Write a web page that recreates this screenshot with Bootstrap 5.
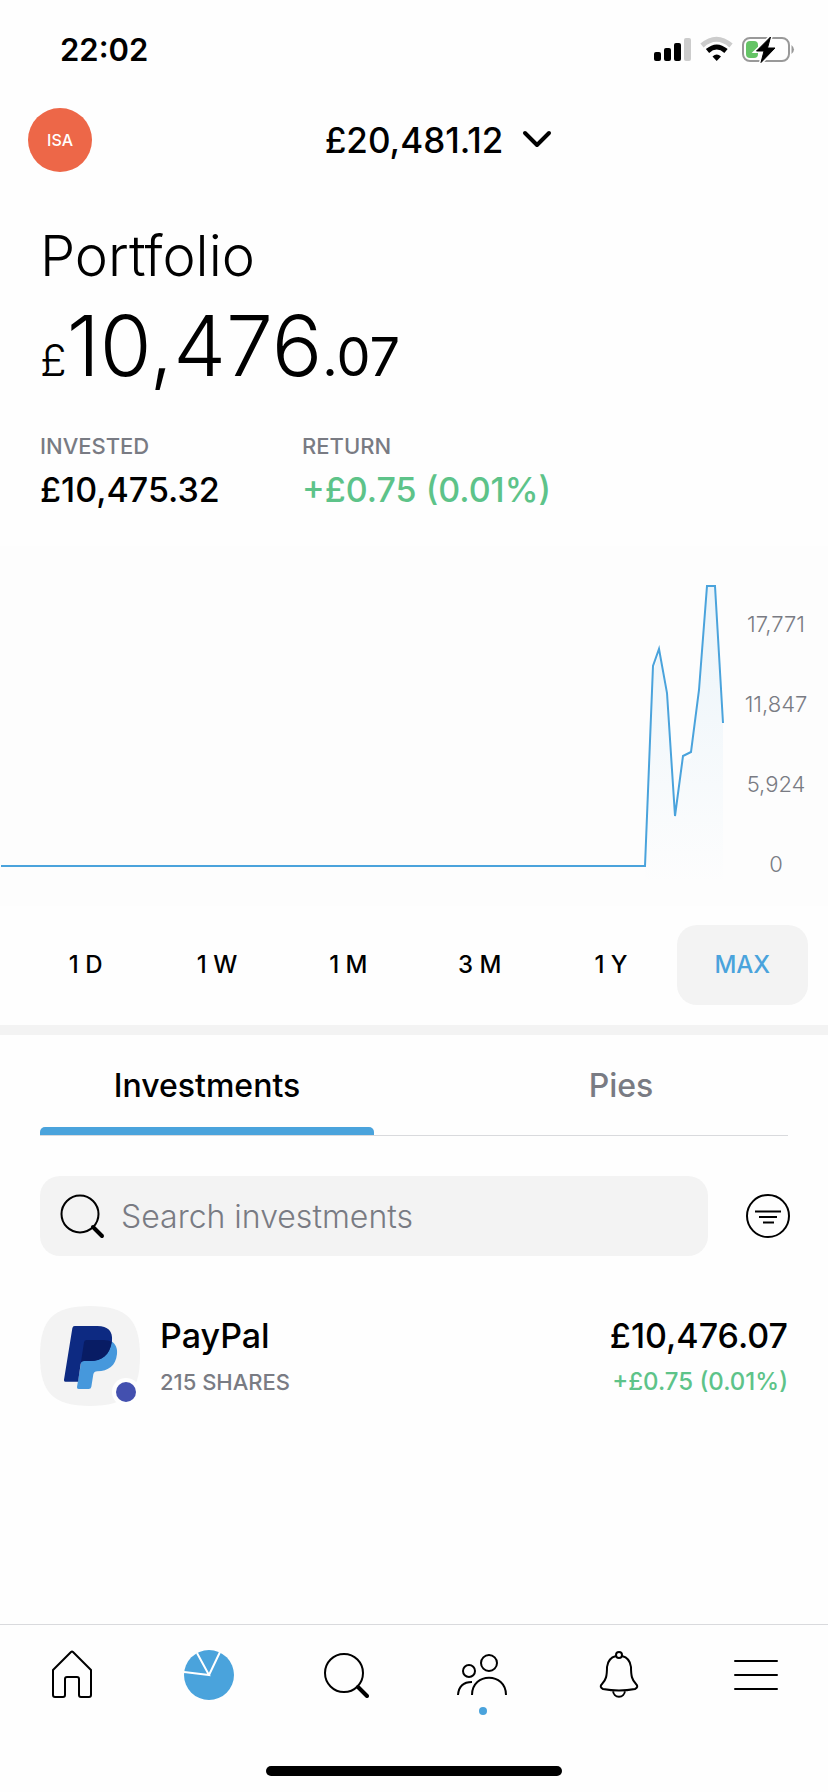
<!DOCTYPE html>
<html lang="en">
<head>
<meta charset="utf-8">
<meta name="viewport" content="width=device-width, initial-scale=1">
<title>Portfolio</title>
<link rel="stylesheet" href="https://cdn.jsdelivr.net/npm/bootstrap@5.3.0/dist/css/bootstrap.min.css">
<style>
  :root { --accent: #4aa3dc; --muted: #797b83; --gain: #5dc389; --soft: #f3f3f3; }
  body { font-family: Inter, "Open Sans", sans-serif; font-weight: 500; color: #000; background: #fefefe; }
  svg { display: block; flex: none; }
  .side { padding-left: 40px; padding-right: 40px; }
  .status-bar { height: 100px; padding: 0 33px 0 60px; font-size: 31px; font-weight: 600; }
  .top-bar { height: 80px; display: grid; grid-template-columns: 64px 1fr; padding: 0 40px 0 28px; align-items: center; }
  .plain { border: 0; background: none; padding: 0; color: inherit; font-weight: inherit; }
  .account { width: 64px; height: 64px; background: #ed6748; color: #fff; font-size: 16px; }
  .figure-text { font-size: 34px; line-height: 40px; }
  .top-bar .figure-text { font-size: 35px; }
  .title { font-size: 56px; line-height: 64px; font-weight: 300; margin: 44px 0 16px; }
  .total { font-size: 84px; line-height: 84px; font-weight: 300; margin-bottom: 44px; }
  .total span { line-height: 1; }
  .total .pound { font-size: 44px; }
  .total .pence { font-size: 54px; font-weight: 400; }
  .caption-text { font-size: 22px; line-height: 28px; color: var(--muted); }
  .stats { display: grid; grid-template-columns: 182px auto; column-gap: 80px; justify-content: start; margin-bottom: 36px; }
  .stats dt, .stats dd { font-weight: 500; margin: 0; }
  .stats dt { margin-bottom: 10px; }
  .gain { color: var(--gain); }
  .chart { height: 360px; background: #fdfdfd; }
  .chart svg { flex: 1 1 0; min-width: 0; height: 100%; }
  .scale { width: 104px; padding-top: 38px; font-size: 22px; line-height: 80px; font-weight: 300; color: var(--muted); text-align: center; }
  .ranges { padding: 19px 20px 20px; border-bottom: 10px solid var(--soft); }
  .ranges .btn { flex: 1 1 0; height: 80px; border: 0; border-radius: 20px; padding: 0; font-size: 24px; font-weight: 500; color: #000; }
  .ranges .btn.active { background: var(--soft); color: var(--accent); }
  .tabs { margin: 0 40px 40px; border-bottom: 1px solid #d9dadd; gap: 80px; }
  .tabs .nav-link { height: 100px; padding: 2px 0 0; border: 0; background: none; font-size: 32px; color: var(--muted); }
  .tabs .nav-link.active { color: #000; position: relative; }
  .tabs .nav-link.active::after { content: ""; position: absolute; left: 0; right: 0; bottom: 0; height: 8px; background: var(--accent); border-radius: 5px 5px 0 0; }
  .search-row { padding: 0 38px 0 40px; gap: 38px; margin-bottom: 50px; }
  .search-box { background: var(--soft); height: 80px; border-radius: 20px; padding: 0 20px; gap: 16px; }
  .search-box input { border: 0; background: none; outline: 0; padding: 2px 0 0; font-size: 32px; font-weight: 300; min-width: 0; }
  .search-box input::placeholder { color: var(--muted); opacity: 1; }
  .holding { color: inherit; gap: 20px; }
  .holding .lines { padding-top: 10px; display: grid; row-gap: 8px; align-content: start; }
  .holding .caption-text, .holding .gain { line-height: 36px; }
  .holding .gain { font-size: 24px; }
  .logo { width: 100px; height: 100px; }
  .bottom-bar { border-top: 1px solid #d9dadd; height: 168px; padding: 0 4px; position: relative; }
  .bottom-bar a { flex: 1 1 0; height: 100px; display: flex; justify-content: center; align-items: center; color: #000; }
  .home-line { position: absolute; left: 50%; bottom: 16px; width: 296px; height: 10px; margin-left: -148px; border-radius: 5px; background: #000; }
</style>
</head>
<body>
<div class="d-flex flex-column min-vh-100">
  <div class="status-bar d-flex align-items-center justify-content-between">
    <span>22:02</span>
    <svg width="142" height="28" viewBox="0 0 142 28" aria-hidden="true">
      <rect x="1" y="16" width="7" height="9" rx="2"/><rect x="11" y="12" width="7" height="13" rx="2"/><rect x="21" y="7" width="7" height="18" rx="2"/><rect x="31" y="2" width="7" height="23" rx="2" fill="#ccc"/>
      <path d="M49 9.500Q63.500-3 78 9.500" fill="none" stroke="#ccc" stroke-width="5"/>
      <path d="M54.500 15Q63.700 7 73 15" fill="none" stroke="#000" stroke-width="5"/>
      <path d="M59.500 20.500Q63.700 16.500 68 20.500L63.700 25z"/>
      <rect x="90" y="2" width="46" height="23" rx="7" fill="none" stroke="#999" stroke-width="2"/>
      <rect x="93" y="5" width="12" height="17" rx="4" fill="#65c466"/>
      <path d="M138.500 9q5 4.500 0 9z" fill="#999"/>
      <path d="M117.500 1L103.500 15h7.500l-3 11.500L122 12h-7.500z" stroke="#fefefe" stroke-width="4"/>
      <path d="M117.500 1L103.500 15h7.500l-3 11.500L122 12h-7.500z" stroke="#000" stroke-linejoin="round"/>
    </svg>
  </div>

  <header class="top-bar">
    <button class="plain account rounded-circle" type="button">ISA</button>
    <button class="plain figure-text d-flex align-items-center justify-content-center" type="button">
      £20,481.12
      <svg class="ms-3" width="36" height="24" viewBox="0 0 36 24" fill="none" stroke="#000" stroke-width="4" stroke-linecap="round" stroke-linejoin="round" aria-hidden="true"><path d="M6 5l12 12L30 5"/></svg>
    </button>
  </header>

  <main class="flex-grow-1">
    <section class="side">
      <h1 class="title">Portfolio</h1>
      <div class="total"><span class="pound">£</span>10,476<span class="pence">.07</span></div>
      <dl class="stats">
        <dt class="caption-text">INVESTED</dt><dt class="caption-text">RETURN</dt>
        <dd class="figure-text">£10,475.32</dd><dd class="figure-text gain text-nowrap">+£0.75 (0.01%)</dd>
      </dl>
    </section>

    <section class="chart d-flex" aria-label="Portfolio value">
      <svg viewBox="0 0 724 360" preserveAspectRatio="none" aria-hidden="true">
        <defs><linearGradient id="fade" x1="0" y1="0" x2="0" y2="1"><stop offset="0" stop-color="#4aa3dc" stop-opacity=".1"/><stop offset="1" stop-color="#4aa3dc" stop-opacity="0"/></linearGradient></defs>
        <path fill="url(#fade)" d="M645 320L653 126 659 108 667 153 675 270 683 216 691 212 699 150 707 40H715L723 177V340H645z"/>
        <path fill="none" stroke="#4aa3dc" stroke-width="2" d="M1 320H645L653 120 659 103 667 147 675 270 683 210 691 206 699 144 707 40H715L723 177"/>
      </svg>
      <div class="scale"><div>17,771</div><div>11,847</div><div>5,924</div><div>0</div></div>
    </section>

    <div class="ranges d-flex" role="group" aria-label="Range">
      <button class="btn" type="button">1 D</button>
      <button class="btn" type="button">1 W</button>
      <button class="btn" type="button">1 M</button>
      <button class="btn" type="button">3 M</button>
      <button class="btn" type="button">1 Y</button>
      <button class="btn active" type="button">MAX</button>
    </div>

    <div class="tabs nav nav-fill flex-nowrap" role="tablist">
      <button class="nav-link active w-100" type="button" role="tab" aria-selected="true">Investments</button>
      <button class="nav-link w-100" type="button" role="tab" aria-selected="false">Pies</button>
    </div>

    <div class="search-row d-flex align-items-center">
      <label class="search-box d-flex align-items-center flex-grow-1">
        <svg width="45" height="45" viewBox="0 0 45 45" fill="none" stroke="#000" aria-hidden="true"><circle cx="20" cy="20" r="18.500" stroke-width="2"/><path d="M33 33l9 9" stroke-width="4" stroke-linecap="round"/></svg>
        <input class="flex-grow-1" type="search" placeholder="Search investments" aria-label="Search investments">
      </label>
      <button class="plain" type="button" aria-label="Filter">
        <svg width="44" height="44" viewBox="0 0 44 44" fill="none" stroke="#000" stroke-width="2" aria-hidden="true"><circle cx="22" cy="22" r="21"/><path d="M9 17.500h26M13 23h18M17 28.500h11"/></svg>
      </button>
    </div>

    <a class="holding side d-flex text-decoration-none" href="#paypal">
      <svg class="logo" viewBox="0 0 300 300" aria-hidden="true">
        <path fill="#f3f3f3" d="M150 0C260 0 300 40 300 150S260 300 150 300 0 260 0 150 40 0 150 0z"/>
        <path fill="#4698dc" d="M214 106C227 114 233 128 231 144 227 180 205 195 172 196Q162 196 160 205L154 242Q153 249 146 249H116Q110 249 111 243L124 165z"/>
        <path fill="#0d2a82" d="M104 60H172C204 60 219 76 216 105 210 148 185 164 151 165H132Q124 165 122 174L114 227H76Q71 227 72 221L97 67Q98 60 104 60z"/>
        <path fill="#081c64" d="M140 102H191Q206 103 215 107C209 149 185 164 151 165H132Q127 165 123 168L132 109Q133 102 140 102z"/>
        <circle cx="258" cy="258" r="42" fill="#fefefe"/><circle cx="258" cy="258" r="30" fill="#4350af"/>
      </svg>
      <span class="lines"><span class="figure-text">PayPal</span><span class="caption-text">215 SHARES</span></span>
      <span class="lines text-end ms-auto"><span class="figure-text">£10,476.07</span><span class="gain">+£0.75 (0.01%)</span></span>
    </a>
  </main>

  <nav class="bottom-bar d-flex" aria-label="Main">
    <a href="#home" aria-label="Home"><svg width="50" height="60" viewBox="0 1 50 60" fill="none" stroke="#000" stroke-width="2" stroke-linejoin="round"><path d="M6 26L24 8Q25 7 26 8L44 26V51Q44 53 42 53H34Q32 53 32 51V35Q32 33 30 33H20Q18 33 18 35V51Q18 53 16 53H8Q6 53 6 51z"/></svg></a>
    <a href="#portfolio" aria-label="Portfolio" aria-current="page"><svg width="50" height="50" viewBox="0 0 50 50"><circle cx="25" cy="25" r="25" fill="#4aa3dc"/><path d="M0 22L25 25 13 3M25 25L36 2" fill="none" stroke="#fff" stroke-width="2"/></svg></a>
    <a href="#search" aria-label="Search"><svg width="46" height="46" viewBox="0 0 46 46" fill="none" stroke="#000"><circle cx="21" cy="21" r="19" stroke-width="2"/><path d="M35 35l9 9" stroke-width="4" stroke-linecap="round"/></svg></a>
    <a href="#community" aria-label="Community"><svg width="52" height="80" viewBox="0 0 52 80" fill="none" stroke="#000" stroke-width="2"><circle cx="33" cy="28" r="8"/><circle cx="13" cy="36" r="6"/><path d="M16 60C16 37 50 37 50 60M2 60Q3 47 16 47" /><circle cx="27" cy="76" r="4" fill="#4aa3dc" stroke="none"/></svg></a>
    <a href="#alerts" aria-label="Notifications"><svg width="42" height="50" viewBox="-1 0 42 50" fill="none" stroke="#000" stroke-width="2"><circle cx="20" cy="5" r="3"/><path d="M17 6Q9 8 8 17C8 26 7 30 3 34Q0 37 4 39 20 42 36 39 40 37 37 34C33 30 32 26 32 17Q31 8 23 6M14 40C14 49 26 49 26 40"/></svg></a>
    <a href="#menu" aria-label="Menu"><svg width="44" height="32" viewBox="0 0 44 32" stroke="#000" stroke-width="2" stroke-linecap="round"><path d="M1 2h42M1 16h42M1 30h42"/></svg></a>
    <div class="home-line"></div>
  </nav>
</div>
<script src="https://cdn.jsdelivr.net/npm/bootstrap@5.3.0/dist/js/bootstrap.bundle.min.js"></script>
</body>
</html>
